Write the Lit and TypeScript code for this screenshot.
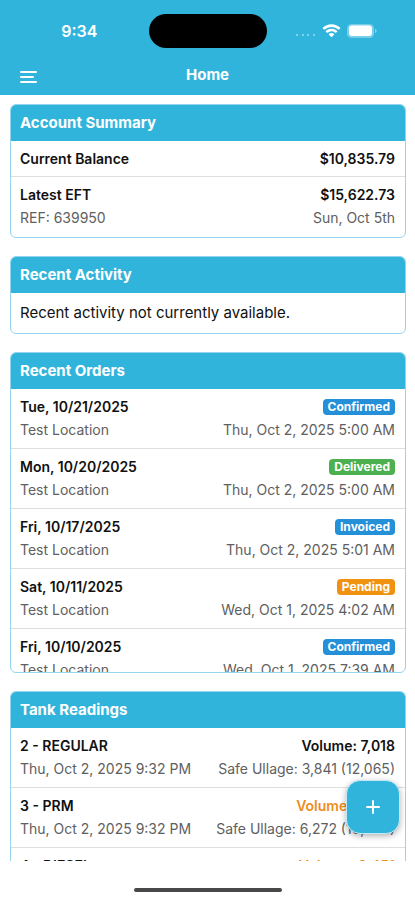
import { LitElement, html, css, svg, nothing } from "lit";
import { customElement, property } from "lit/decorators.js";

type Tone = "info" | "success" | "warning";

interface Order {
  date: string;
  location: string;
  status: string;
  tone: Tone;
  updated: string;
}

interface Tank {
  name: string;
  read: string;
  volume: string;
  ullage: string;
  low?: boolean;
}

const ORDERS: Order[] = [
  { date: "Tue, 10/21/2025", location: "Test Location", status: "Confirmed", tone: "info", updated: "Thu, Oct 2, 2025 5:00 AM" },
  { date: "Mon, 10/20/2025", location: "Test Location", status: "Delivered", tone: "success", updated: "Thu, Oct 2, 2025 5:00 AM" },
  { date: "Fri, 10/17/2025", location: "Test Location", status: "Invoiced", tone: "info", updated: "Thu, Oct 2, 2025 5:01 AM" },
  { date: "Sat, 10/11/2025", location: "Test Location", status: "Pending", tone: "warning", updated: "Wed, Oct 1, 2025 4:02 AM" },
  { date: "Fri, 10/10/2025", location: "Test Location", status: "Confirmed", tone: "info", updated: "Wed, Oct 1, 2025 7:39 AM" },
];

const TANKS: Tank[] = [
  { name: "2 - REGULAR", read: "Thu, Oct 2, 2025 9:32 PM", volume: "7,018", ullage: "3,841 (12,065)" },
  { name: "3 - PRM", read: "Thu, Oct 2, 2025 9:32 PM", volume: "3,986", ullage: "6,272 (10,258)", low: true },
  { name: "4 - DIESEL", read: "Thu, Oct 2, 2025 9:32 PM", volume: "3,451", ullage: "6,807 (10,258)", low: true },
];

@customElement("status-bar")
class StatusBar extends LitElement {
  static styles = css`
    :host {
      display: grid;
      grid-template-columns: 1fr auto 1fr;
      align-items: center;
      padding-top: 14px;
      color: #fff;
    }
    .time {
      justify-self: center;
      padding-left: 10px;
      font-size: 16px;
      line-height: 20px;
      font-weight: 600;
    }
    .island {
      width: 118px;
      height: 34px;
      border-radius: 17px;
      background: #000;
    }
    .signals {
      justify-self: center;
      display: flex;
      align-items: center;
      gap: 6px;
      padding-right: 10px;
    }
  `;

  render() {
    return html`
      <span class="time">9:34</span>
      <span class="island"></span>
      <span class="signals">
        <svg width="21" height="14" viewBox="0 0 21 14" fill="#fff" opacity=".4" aria-hidden="true">
          ${[1, 7, 12, 18].map((x) => svg`<rect x=${x} y="10" width="2" height="2" />`)}
        </svg>
        <svg width="19" height="14" viewBox="0 0 18 14" fill="#fff" aria-hidden="true">
          <path d="M9 0.3C5.6 0.3 2.5 1.6 0.3 3.8a.5.5 0 0 0 0 .7l1.1 1.1c.2.2.5.2.7 0A10 10 0 0 1 9 2.9a10 10 0 0 1 6.9 2.7c.2.2.5.2.7 0l1.1-1.1a.5.5 0 0 0 0-.7A12.500 12.500 0 0 0 9 .3Z" />
          <path d="M9 4.700c-2.200 0-4.200.8-5.700 2.200a.5.5 0 0 0 0 .7l1.100 1.100c.2.2.5.2.7 0A5.700 5.700 0 0 1 9 7.200c1.500 0 2.900.6 3.900 1.500.2.2.5.2.7 0l1.100-1.100a.5.5 0 0 0 0-.7A8.300 8.300 0 0 0 9 4.700Z" />
          <path d="M9 8.900c-1.100 0-2 .4-2.700 1a.5.5 0 0 0 0 .7l2.300 2.300c.2.2.6.2.8 0l2.300-2.300a.5.5 0 0 0 0-.7 4 4 0 0 0-2.700-1Z" />
        </svg>
        <svg width="30" height="14" viewBox="0 0 30 14" aria-hidden="true">
          <rect x="0" y="0" width="27" height="14" rx="4.500" fill="#fff" fill-opacity=".35" />
          <rect x="2" y="1.500" width="23" height="10.500" rx="3" fill="#fff" />
          <path d="M28 4.800v4.400c1-.4 1.600-1.300 1.600-2.200S29 5.200 28 4.800Z" fill="#fff" opacity=".4" />
        </svg>
      </span>
    `;
  }
}

@customElement("info-card")
class InfoCard extends LitElement {
  @property() heading = "";

  static styles = css`
    :host {
      display: flex;
      flex-direction: column;
      flex: none;
      box-sizing: border-box;
      overflow: hidden;
      border: 1px solid #93d5ec;
      border-radius: 6px;
      background: #fff;
    }
    .heading {
      flex: none;
      margin: 0;
      padding: 8px 10px 8px 9px;
      background: #31b4dc;
      color: #fff;
      font-size: 15px;
      line-height: 20px;
      font-weight: 700;
    }
    .body {
      overflow: hidden;
    }
  `;

  render() {
    return html`
      <h2 class="heading">${this.heading}</h2>
      <div class="body"><slot></slot></div>
    `;
  }
}

@customElement("app-root")
class AppRoot extends LitElement {
  static styles = css`
    :host {
      display: flex;
      flex-direction: column;
      height: 100vh;
      overflow: hidden;
      position: relative;
      background: #fff;
      color: #111;
      font-family: Inter, "Liberation Sans", sans-serif;
      font-size: 14px;
      line-height: 20px;
    }
    .top {
      flex: none;
      background: #31b4dc;
      color: #fff;
    }
    .nav {
      display: grid;
      grid-template-columns: 1fr auto 1fr;
      align-items: center;
      padding: 9px 19px 2px;
      height: 36px;
    }
    .menu {
      justify-self: start;
      display: flex;
      padding: 0;
      border: 0;
      background: none;
      color: inherit;
    }
    .title {
      margin: 0;
      font-size: 15px;
      line-height: 20px;
      font-weight: 700;
    }
    .content {
      flex: 1;
      min-height: 0;
      overflow: hidden;
      display: flex;
      flex-direction: column;
      gap: 18px;
      padding: 9px 9px 0 10px;
    }
    .list {
      margin: 0;
      padding: 0;
      list-style: none;
    }
    .orders {
      height: 283px;
      overflow: hidden;
    }
    .row {
      display: flex;
      flex-direction: column;
      gap: 3px;
      padding: 8px 10px 8px 9px;
      border-bottom: 1px solid #dedede;
    }
    .row.single {
      padding-bottom: 7px;
    }
    .row:last-child {
      border-bottom-color: transparent;
    }
    .line {
      display: flex;
      justify-content: space-between;
      align-items: center;
    }
    .strong {
      font-weight: 600;
    }
    .muted {
      color: #606060;
    }
    .note {
      margin: 0;
      padding: 10px 10px 10px 9px;
      font-size: 15px;
    }
    .low {
      color: #ee8d1b;
    }
    .badge {
      padding: 0 5px;
      border-radius: 4px;
      color: #fff;
      font-size: 12px;
      line-height: 16px;
      font-weight: 700;
    }
    .info {
      background: #2490d8;
    }
    .success {
      background: #4cb050;
    }
    .warning {
      background: #f0920f;
    }
    .add {
      position: absolute;
      right: 15px;
      bottom: 66px;
      display: grid;
      place-items: center;
      width: 54px;
      height: 54px;
      padding: 0;
      border: 1px solid #c4e9f5;
      border-radius: 14px;
      background: #31b4dc;
      color: #fff;
      box-shadow: 0 2px 6px rgba(0, 0, 0, 0.3);
    }
    .home {
      flex: none;
      display: grid;
      place-items: center;
      height: 39px;
      padding-top: 18px;
      box-sizing: border-box;
    }
    .bar {
      width: 148px;
      height: 4px;
      border-radius: 2px;
      background: #48484a;
    }
  `;

  private row(left: unknown, right: unknown, subLeft?: string, subRight?: string) {
    return html`
      <li class="row ${subLeft ? "" : "single"}">
        <div class="line">${left}${right}</div>
        ${subLeft
          ? html`<div class="line muted"><span>${subLeft}</span><span>${subRight}</span></div>`
          : nothing}
      </li>
    `;
  }

  private strong(text: string) {
    return html`<span class="strong">${text}</span>`;
  }

  render() {
    return html`
      <header class="top">
        <status-bar></status-bar>
        <div class="nav">
          <button class="menu" aria-label="Menu">
            <svg width="19" height="18" viewBox="0 0 19 18" fill="none" stroke="currentColor" stroke-width="2" stroke-linecap="round" aria-hidden="true">
              <path d="M2 6H17M2 11H14M2 16H17" />
            </svg>
          </button>
          <h1 class="title">Home</h1>
        </div>
      </header>
      <main class="content">
        <info-card heading="Account Summary">
          <ul class="list">
            ${this.row(this.strong("Current Balance"), this.strong("$10,835.79"))}
            ${this.row(this.strong("Latest EFT"), this.strong("$15,622.73"), "REF: 639950", "Sun, Oct 5th")}
          </ul>
        </info-card>
        <info-card heading="Recent Activity">
          <p class="note">Recent activity not currently available.</p>
        </info-card>
        <info-card heading="Recent Orders">
          <ul class="list orders">
            ${ORDERS.map((o) =>
              this.row(
                this.strong(o.date),
                html`<span class="badge ${o.tone}">${o.status}</span>`,
                o.location,
                o.updated,
              ),
            )}
          </ul>
        </info-card>
        <info-card heading="Tank Readings">
          <ul class="list">
            ${TANKS.map((t) =>
              this.row(
                this.strong(t.name),
                html`<span class="strong ${t.low ? "low" : ""}">Volume: ${t.volume}</span>`,
                t.read,
                `Safe Ullage: ${t.ullage}`,
              ),
            )}
          </ul>
        </info-card>
      </main>
      <button class="add" aria-label="Add">
        <svg width="16" height="16" viewBox="0 0 16 16" fill="none" stroke="currentColor" stroke-width="2" stroke-linecap="round" aria-hidden="true">
          <path d="M8 2V14M2 8H14" />
        </svg>
      </button>
      <footer class="home"><span class="bar"></span></footer>
    `;
  }
}
